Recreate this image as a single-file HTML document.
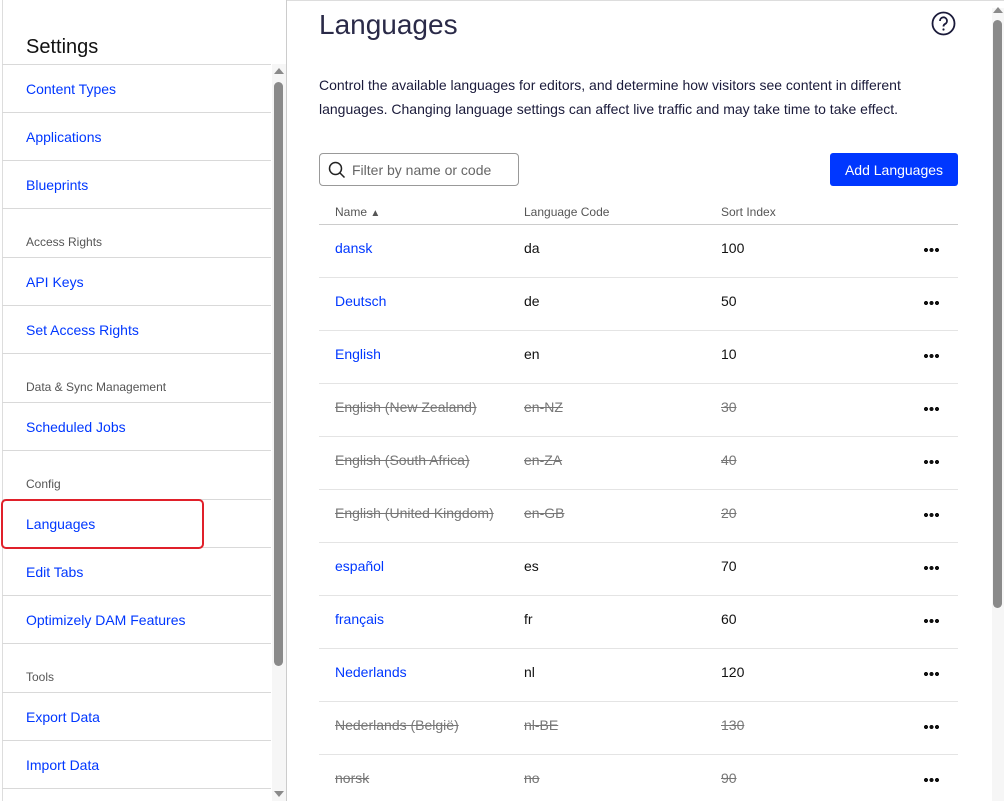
<!DOCTYPE html><html><head><style>
body{margin:0;width:1004px;height:801px;overflow:hidden;background:#fff;font-family:"Liberation Sans",sans-serif;position:relative}
.a{position:absolute;white-space:nowrap}
.l{position:absolute;left:2px;width:269px;height:1px;background:#d9d9d9}
.it{position:absolute;left:26px;font-size:14px;color:#0037ff;transform:translateY(-50%)}
.gh{position:absolute;left:26px;font-size:12px;color:#555;transform:translateY(-50%)}
.r{position:absolute;left:319px;width:639px;height:1px;background:#e4e4e4}
.c{position:absolute;font-size:14px;transform:translateY(-50%);color:#111}
.s{color:#777;text-decoration:line-through}
.b{color:#0037ff}
.dots{position:absolute;left:924px;width:16px;height:4px;background:radial-gradient(circle at 2px 2px,#111 1.9px,transparent 2.2px) 0 0/5.5px 4px repeat-x}
</style></head><body>
<div class="a" style="left:2px;top:0;width:1px;height:801px;background:#ddd"></div>
<div class="a" style="left:286px;top:0;width:1px;height:801px;background:#ccc"></div>
<div class="a" style="left:287px;top:0;width:717px;height:1px;background:#ddd"></div>
<div class="a" style="left:26px;top:36px;font-size:20px;color:#111">Settings</div>
<div class="a" style="left:272px;top:64px;width:14px;height:737px;background:#f6f6f6"></div>
<div class="a" style="left:274px;top:82px;width:9px;height:584px;background:#8a8a8a;border-radius:5px"></div>
<div class="a" style="left:274px;top:68px;width:0;height:0;border-left:5px solid transparent;border-right:5px solid transparent;border-bottom:6px solid #8a8a8a"></div>
<div class="a" style="left:274px;top:791px;width:0;height:0;border-left:5px solid transparent;border-right:5px solid transparent;border-top:6px solid #8a8a8a"></div>
<div class="l" style="top:64px"></div><div class="l" style="top:112px"></div><div class="l" style="top:160px"></div><div class="l" style="top:208px"></div><div class="l" style="top:257px"></div><div class="l" style="top:305px"></div><div class="l" style="top:353px"></div><div class="l" style="top:402px"></div><div class="l" style="top:450px"></div><div class="l" style="top:499px"></div><div class="l" style="top:547px"></div><div class="l" style="top:595px"></div><div class="l" style="top:643px"></div><div class="l" style="top:692px"></div><div class="l" style="top:740px"></div><div class="l" style="top:788px"></div>
<div class="it" style="top:89px">Content Types</div>
<div class="it" style="top:137px">Applications</div>
<div class="it" style="top:185px">Blueprints</div>
<div class="gh" style="top:242px">Access Rights</div>
<div class="it" style="top:282px">API Keys</div>
<div class="it" style="top:330px">Set Access Rights</div>
<div class="gh" style="top:387px">Data &amp; Sync Management</div>
<div class="it" style="top:427px">Scheduled Jobs</div>
<div class="gh" style="top:484px">Config</div>
<div class="it" style="top:524px">Languages</div>
<div class="it" style="top:572px">Edit Tabs</div>
<div class="it" style="top:620px">Optimizely DAM Features</div>
<div class="gh" style="top:677px">Tools</div>
<div class="it" style="top:717px">Export Data</div>
<div class="it" style="top:765px">Import Data</div>
<div class="a" style="left:1px;top:499px;width:199px;height:46px;border:2px solid #e0202a;border-radius:5px"></div>

<div class="a" style="left:319px;top:9px;font-size:28px;color:#2a2a48">Languages</div>
<svg class="a" style="left:931px;top:11px" width="25" height="25" viewBox="0 0 25 25"><circle cx="12.5" cy="12.5" r="11" fill="none" stroke="#1a1a3a" stroke-width="1.8"/><path d="M9 10a3.5 3.5 0 1 1 5 3c-1.2.6-1.5 1.2-1.5 2.5" fill="none" stroke="#1a1a3a" stroke-width="1.8"/><circle cx="12.5" cy="18.5" r="1.1" fill="#1a1a3a"/></svg>
<div class="a" style="left:992px;top:8px;width:12px;height:793px;background:#f6f6f6"></div>
<div class="a" style="left:993px;top:20px;width:9px;height:588px;background:#8a8a8a;border-radius:5px"></div>
<div class="a" style="left:993px;top:7px;width:0;height:0;border-left:5px solid transparent;border-right:5px solid transparent;border-bottom:6px solid #8a8a8a"></div>
<div class="a" style="left:319px;top:73px;font-size:14px;line-height:24px;color:#1a1a3a;white-space:normal;width:640px">Control the available languages for editors, and determine how visitors see content in different languages. Changing language settings can affect live traffic and may take time to take effect.</div>
<div class="a" style="left:319px;top:153px;width:198px;height:31px;border:1px solid #999;border-radius:4px"></div>
<svg class="a" style="left:328px;top:161px" width="18" height="18" viewBox="0 0 18 18"><circle cx="7.5" cy="7.5" r="6" fill="none" stroke="#222" stroke-width="1.5"/><path d="M12 12l4.5 4.5" stroke="#222" stroke-width="1.5"/></svg>
<div class="a" style="left:352px;top:162px;font-size:14px;color:#666">Filter by name or code</div>
<div class="a" style="left:830px;top:153px;width:128px;height:33px;background:#0037ff;border-radius:3px;color:#fff;font-size:14px;line-height:35px;text-align:center">Add Languages</div>
<div class="a" style="left:335px;top:205px;font-size:12px;color:#555">Name <span style="font-size:10px">▲</span></div>
<div class="a" style="left:524px;top:205px;font-size:12px;color:#555">Language Code</div>
<div class="a" style="left:721px;top:205px;font-size:12px;color:#555">Sort Index</div>
<div class="r" style="top:224px;background:#ccc"></div>
<div class="r" style="top:277px"></div><div class="r" style="top:330px"></div><div class="r" style="top:383px"></div><div class="r" style="top:436px"></div><div class="r" style="top:489px"></div><div class="r" style="top:542px"></div><div class="r" style="top:595px"></div><div class="r" style="top:648px"></div><div class="r" style="top:701px"></div><div class="r" style="top:754px"></div>

<div class="c b" style="left:335px;top:248px">dansk</div><div class="c" style="left:524px;top:248px">da</div><div class="c" style="left:721px;top:248px">100</div><div class="dots" style="top:248px"></div>
<div class="c b" style="left:335px;top:301px">Deutsch</div><div class="c" style="left:524px;top:301px">de</div><div class="c" style="left:721px;top:301px">50</div><div class="dots" style="top:301px"></div>
<div class="c b" style="left:335px;top:354px">English</div><div class="c" style="left:524px;top:354px">en</div><div class="c" style="left:721px;top:354px">10</div><div class="dots" style="top:354px"></div>
<div class="c s" style="left:335px;top:407px">English (New Zealand)</div><div class="c s" style="left:524px;top:407px">en-NZ</div><div class="c s" style="left:721px;top:407px">30</div><div class="dots" style="top:407px"></div>
<div class="c s" style="left:335px;top:460px">English (South Africa)</div><div class="c s" style="left:524px;top:460px">en-ZA</div><div class="c s" style="left:721px;top:460px">40</div><div class="dots" style="top:460px"></div>
<div class="c s" style="left:335px;top:513px">English (United Kingdom)</div><div class="c s" style="left:524px;top:513px">en-GB</div><div class="c s" style="left:721px;top:513px">20</div><div class="dots" style="top:513px"></div>
<div class="c b" style="left:335px;top:566px">español</div><div class="c" style="left:524px;top:566px">es</div><div class="c" style="left:721px;top:566px">70</div><div class="dots" style="top:566px"></div>
<div class="c b" style="left:335px;top:619px">français</div><div class="c" style="left:524px;top:619px">fr</div><div class="c" style="left:721px;top:619px">60</div><div class="dots" style="top:619px"></div>
<div class="c b" style="left:335px;top:672px">Nederlands</div><div class="c" style="left:524px;top:672px">nl</div><div class="c" style="left:721px;top:672px">120</div><div class="dots" style="top:672px"></div>
<div class="c s" style="left:335px;top:725px">Nederlands (België)</div><div class="c s" style="left:524px;top:725px">nl-BE</div><div class="c s" style="left:721px;top:725px">130</div><div class="dots" style="top:725px"></div>
<div class="c s" style="left:335px;top:778px">norsk</div><div class="c s" style="left:524px;top:778px">no</div><div class="c s" style="left:721px;top:778px">90</div><div class="dots" style="top:778px"></div>
</body></html>
